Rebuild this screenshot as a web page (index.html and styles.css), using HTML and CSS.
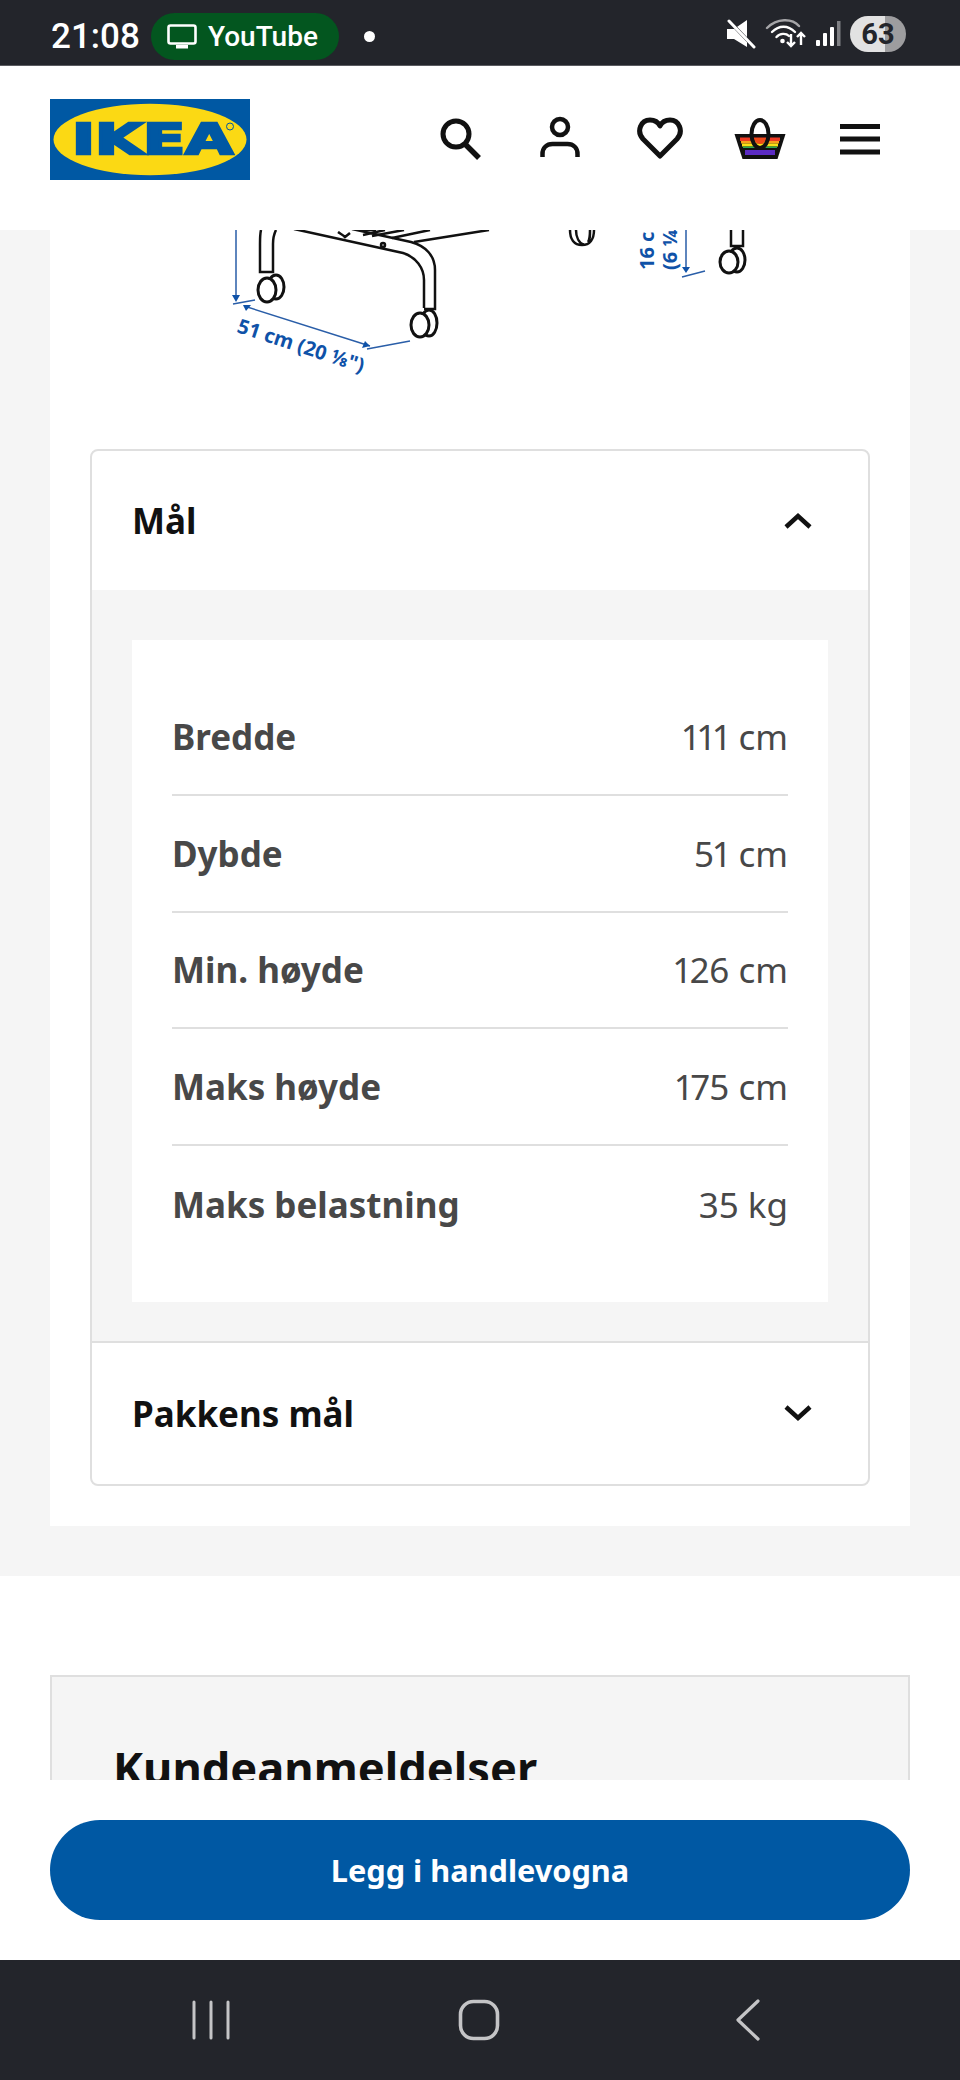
FILE: index.html
```html
<!DOCTYPE html>
<html lang="no">
<head>
  <meta charset="UTF-8" />
  <meta name="viewport" content="width=device-width, initial-scale=1.0" />
  <title>IKEA - Mål</title>
  <link rel="stylesheet" href="styles.css">
</head>

<body>

<!-- Status bar -->
<div class="statusbar">
  <span class="clock">21:08</span>
  <div class="cast-pill">
    <svg class="cast-icon" width="30" height="25" viewBox="0 0 30 25">
      <rect x="1.5" y="1.5" width="27" height="18" rx="2" fill="none" stroke="#fff" stroke-width="2.6"/>
      <rect x="9" y="21" width="12" height="3.5" fill="#fff"/>
    </svg>
    <span>YouTube</span>
  </div>
  <span class="status-dot"></span>
  <div class="status-right">
    <svg width="30" height="30" viewBox="0 0 30 30">
      <path d="M1 10h7L21 1v27L8 20H1z" fill="#fff"/>
      <path d="M5 4l24 25" stroke="#23252b" stroke-width="3.500"/>
      <path d="M3 2l25 26" stroke="#fff" stroke-width="3" stroke-linecap="round"/>
    </svg>
    <svg class="wifi" width="42" height="30" viewBox="0 0 42 30">
      <path d="M2 9C12 -1 27 -1 34 7" fill="none" stroke="#a5a5a8" stroke-width="2.4" stroke-linecap="round"/>
      <path d="M7 13C14 6 23 6 30 13" fill="none" stroke="#fff" stroke-width="2.4" stroke-linecap="round"/>
      <path d="M11.500 18C15 14 21 14 24 17" fill="none" stroke="#fff" stroke-width="2.4" stroke-linecap="round"/>
      <circle cx="17.500" cy="22" r="2.300" fill="#fff"/>
      <path d="M26 15v12M22 23l4 4 4-4" fill="none" stroke="#fff" stroke-width="2.400"/>
      <path d="M36 26V14M32 18l4-4 4 4" fill="none" stroke="#fff" stroke-width="2.400"/>
    </svg>
    <svg class="signal" width="26" height="28" viewBox="0 0 26 28">
      <rect x="1" y="20" width="4" height="6" rx="1" fill="#fff"/>
      <rect x="8" y="13" width="4" height="13" rx="1" fill="#fff"/>
      <rect x="15" y="7" width="4" height="19" rx="1" fill="#fff"/>
      <rect x="22" y="1" width="3.500" height="25" fill="#7f8084"/>
    </svg>
    <div class="battery">63</div>
  </div>
</div>

<!-- Header -->
<header class="site-header">
  <svg class="logo" width="200" height="81" viewBox="0 0 200 81">
    <rect width="200" height="81" fill="#0058a3"/>
    <ellipse cx="100" cy="40.500" rx="96.500" ry="35.700" fill="#fbd914"/>
    <text class="logo-text" x="22" y="55" textLength="161" lengthAdjust="spacingAndGlyphs">IKEA</text>
    <circle cx="180" cy="27.500" r="3.500" fill="none" stroke="#0058a3" stroke-width="1"/>
  </svg>
  <nav class="header-icons">
    <a href="#"><svg width="50" height="50" viewBox="0 0 50 50">
      <circle cx="21" cy="20" r="13" fill="none" stroke="#111" stroke-width="5"/>
      <path d="M30 30l14 14" stroke="#111" stroke-width="5.500"/>
    </svg></a>
    <a href="#"><svg width="50" height="50" viewBox="0 0 50 50">
      <circle cx="25" cy="13" r="8" fill="none" stroke="#111" stroke-width="4.500"/>
      <path d="M7.500 43v-3c0-6 4-10 10-10h15c6 0 10 4 10 10v3" fill="none" stroke="#111" stroke-width="4.500"/>
    </svg></a>
    <a href="#"><svg width="50" height="50" viewBox="0 0 50 50">
      <path d="M25 42L8 25C1 17 6 6 15 6c4 0 8 2 10 6 2-4 6-6 10-6 9 0 14 11 7 19z" fill="none" stroke="#111" stroke-width="5" stroke-linejoin="round"/>
    </svg></a>
    <a href="#"><svg width="54" height="50" viewBox="0 0 54 50">
      <path d="M1.500 20h51l-8 25h-35z" fill="#111"/>
      <rect x="7" y="23.500" width="40" height="3.500" fill="#ee3a24"/>
      <rect x="8" y="27" width="38" height="2.500" fill="#f7a11a"/>
      <rect x="9" y="29.500" width="36" height="3" fill="#fbe116"/>
      <rect x="10" y="32.500" width="34" height="1.500" fill="#2fa84f"/>
      <rect x="10" y="34" width="34" height="1.500" fill="#111"/>
      <rect x="12" y="36" width="30" height="5" fill="#5b2bc4"/>
      <path d="M21 24a6 6 0 0 0 12 0z" fill="#ee4a18"/>
      <ellipse cx="27" cy="20" rx="8.500" ry="14" fill="none" stroke="#111" stroke-width="4"/>
    </svg></a>
    <a href="#"><svg width="50" height="50" viewBox="0 0 50 50">
      <path d="M5 12.500h40M5 25h40M5 38h40" stroke="#111" stroke-width="5"/>
    </svg></a>
  </nav>
</header>

<!-- Scrolled page -->
<main class="page">
  <section class="product-card">
    <svg class="sketch" width="860" height="219" viewBox="50 230 860 219">
      <g class="sketch-black">
        <path d="M261 230c-1 4-1 8-1 14v28h13v-28c0-6 1-10 3-14"/>
        <path d="M294 229l109 24c13 4 21 15 21 27v28"/>
        <path d="M352 229l59 13c15 4 24 14 24 28v39h-11"/>
        <path d="M338 232c3 2 5 3 7 5l5-4M362 230l14 0M385 230l-22 5M404 230l-32 6M430 230l-38 8M414 242l75-12"/>
        <circle cx="383" cy="245" r="2"/>
        <path d="M570 230c0 9 4 15 12 15s12-6 12-15M576 230c0 7 3 13 8 15M590 230c0 7 0 9-2 12"/>
        <path d="M731 230v16h12v-16"/>
      </g>
      <g class="sketch-wheels">
        <ellipse cx="276" cy="287" rx="8" ry="12"/>
        <ellipse cx="267" cy="290" rx="9" ry="12"/>
        <ellipse cx="429" cy="323" rx="8" ry="13"/>
        <ellipse cx="420" cy="325" rx="9" ry="12"/>
        <ellipse cx="737" cy="260" rx="8" ry="12"/>
        <ellipse cx="729" cy="262" rx="9" ry="11"/>
      </g>
      <g class="sketch-blue">
        <path d="M236 230v66M233 304l22-4M244 306l126 40M367 349l43-8M686 230v38M682 277l23-6"/>
      </g>
      <g class="sketch-arrow">
        <path d="M232 295h8l-4 7zM243 305l8 0-5 6zM370 346l-8 2 3-7zM682 267h8l-4 6z"/>
      </g>
      <text class="sketch-label" transform="translate(236 332) rotate(18)">51 cm (20 ⅛")</text>
      <text class="sketch-label" transform="translate(654 270) rotate(-90)">16 cm</text>
      <text class="sketch-label" transform="translate(677 270) rotate(-90)">(6 ¼")</text>
    </svg>

    <div class="accordion">
      <div class="accordion-head">
        <h3>Mål</h3>
        <svg width="30" height="20" viewBox="0 0 30 20"><path d="M3 16L15 5l12 11" fill="none" stroke="#111" stroke-width="4.500"/></svg>
      </div>
      <div class="accordion-body">
        <div class="measure-panel">
          <div class="measure-row"><span class="measure-name">Bredde</span><span class="measure-value">111 cm</span></div>
          <div class="measure-row"><span class="measure-name">Dybde</span><span class="measure-value">51 cm</span></div>
          <div class="measure-row"><span class="measure-name">Min. høyde</span><span class="measure-value">126 cm</span></div>
          <div class="measure-row"><span class="measure-name">Maks høyde</span><span class="measure-value">175 cm</span></div>
          <div class="measure-row"><span class="measure-name">Maks belastning</span><span class="measure-value">35 kg</span></div>
        </div>
      </div>
      <div class="accordion-head accordion-head-closed">
        <h3>Pakkens mål</h3>
        <svg width="30" height="20" viewBox="0 0 30 20"><path d="M3 4l12 11L27 4" fill="none" stroke="#111" stroke-width="4.500"/></svg>
      </div>
    </div>
  </section>

  <div class="page-gap"></div>

  <section class="reviews">
    <h2>Kundeanmeldelser</h2>
  </section>
</main>

<!-- Sticky button -->
<div class="buy-bar">
  <button class="buy-btn">Legg i handlevogna</button>
</div>

<!-- Android navigation -->
<div class="navbar">
  <svg width="40" height="40" viewBox="0 0 40 40">
    <path d="M3 2v36M20 2v36M37 2v36" stroke="#c4c4c6" stroke-width="3" stroke-linecap="round"/>
  </svg>
  <svg width="42" height="42" viewBox="0 0 42 42">
    <rect x="2.500" y="2.500" width="37" height="37" rx="13" fill="none" stroke="#c4c4c6" stroke-width="3.600"/>
  </svg>
  <svg width="26" height="42" viewBox="0 0 26 42">
    <path d="M23 2L3 21l20 19" fill="none" stroke="#c4c4c6" stroke-width="3.200" stroke-linecap="round" stroke-linejoin="round"/>
  </svg>
</div>

</body>
</html>
```

FILE: styles.css
```css
* { margin: 0; padding: 0; box-sizing: border-box; }

body {
  width: 960px;
  height: 2080px;
  display: flex;
  flex-direction: column;
  overflow: hidden;
  font-family: 'Noto Sans', sans-serif;
  background: white;
}

/* Status bar */
.statusbar {
  height: 66px;
  flex: none;
  display: flex;
  align-items: center;
  padding: 8px 54px 0 51px;
  background: #23252b;
  border-bottom: 1px solid #5a5b60;
  color: white;
  font-family: Roboto, sans-serif;
}

.clock {
  font-size: 35px;
  font-weight: 500;
  width: 100px;
}

.cast-pill {
  width: 188px;
  height: 47px;
  display: flex;
  align-items: center;
  gap: 11px;
  padding-left: 16px;
  border-radius: 24px;
  background: #03561f;
  font-size: 28px;
  font-weight: 500;
}

.status-dot {
  width: 11px;
  height: 11px;
  margin-left: 25px;
  border-radius: 50%;
  background: white;
}

.status-right {
  margin-left: auto;
  margin-top: -6px;
  display: flex;
  align-items: center;
  gap: 8px;
}

.wifi { margin-left: 1px; }

.battery {
  width: 56px;
  height: 36px;
  margin-left: 1px;
  border-radius: 18px;
  background: linear-gradient(to right, #e2e2e2 62%, #9d9d9f 62%);
  color: #23252b;
  font-size: 29px;
  font-weight: 700;
  line-height: 36px;
  text-align: center;
}

/* Header */
.site-header {
  height: 164px;
  flex: none;
  display: flex;
  justify-content: space-between;
  align-items: center;
  padding: 0 50px 18px;
  background: white;
}

.logo-text {
  font-family: 'DejaVu Sans', sans-serif;
  font-size: 42px;
  font-weight: 700;
  fill: #0058a3;
  stroke: #0058a3;
  stroke-width: 2.5px;
}

.header-icons {
  display: flex;
}

.header-icons a {
  width: 100px;
  height: 60px;
  display: flex;
  justify-content: center;
  align-items: center;
}

/* Page */
.page {
  flex: 1;
  min-height: 0;
  overflow: hidden;
  background: white;
}

.product-card {
  padding: 0 50px 40px;
  background: linear-gradient(#f5f5f5, #f5f5f5) left / 50px 100% no-repeat,
              linear-gradient(#f5f5f5, #f5f5f5) right / 50px 100% no-repeat,
              white;
}

.sketch {
  display: block;
}

.sketch-black * {
  fill: none;
  stroke: #111;
  stroke-width: 2.5px;
}

.sketch-wheels ellipse {
  fill: white;
  stroke: #111;
  stroke-width: 3px;
}

.sketch-blue path {
  fill: none;
  stroke: #2a5ea8;
  stroke-width: 1.5px;
}

.sketch-arrow path { fill: #0f52a8; }

.sketch-label {
  font-size: 20px;
  font-weight: 700;
  fill: #0f52a8;
}

.accordion {
  margin: 0 40px;
  border: 2px solid #dfdfdf;
  border-radius: 8px;
  overflow: hidden;
  background: white;
}

.accordion-head {
  height: 139px;
  display: flex;
  justify-content: space-between;
  align-items: center;
  padding: 0 55px 0 40px;
}

.accordion-head-closed {
  height: 143px;
  border-top: 2px solid #dfdfdf;
}

.accordion-head h3 {
  font-size: 35px;
  font-weight: 700;
  color: #111;
}

.accordion-body {
  padding: 50px 40px 39px;
  background: #f5f5f5;
}

.measure-panel {
  padding: 39px 40px;
  background: white;
}

.measure-row {
  height: 116.8px;
  display: flex;
  justify-content: space-between;
  align-items: center;
  border-bottom: 2px solid #dfdfdf;
  font-size: 35px;
  color: #484848;
  font-variant-numeric: proportional-nums;
}

.measure-row:last-child { border-bottom: none; }

.measure-name { font-weight: 700; }

.page-gap {
  height: 50px;
  background: #f5f5f5;
}

.reviews {
  height: 110px;
  margin: 99px 50px 0;
  padding: 58px 61px 0;
  background: #f5f5f5;
  border: 2px solid #dfdfdf;
  border-bottom: none;
}

.reviews h2 {
  font-size: 45.2px;
  font-weight: 700;
  line-height: 66px;
  color: #111;
}

/* Sticky button */
.buy-bar {
  height: 180px;
  flex: none;
  padding: 40px 50px;
  background: white;
}

.buy-btn {
  width: 100%;
  height: 100px;
  border: none;
  border-radius: 50px;
  background: #0058a3;
  color: white;
  font-family: 'Noto Sans', sans-serif;
  font-size: 30.7px;
  font-weight: 700;
}

/* Android navigation */
.navbar {
  height: 120px;
  flex: none;
  display: grid;
  grid-template-columns: 422px 114px 1fr;
  align-items: center;
  justify-items: center;
  background: #23252b;
}
```
